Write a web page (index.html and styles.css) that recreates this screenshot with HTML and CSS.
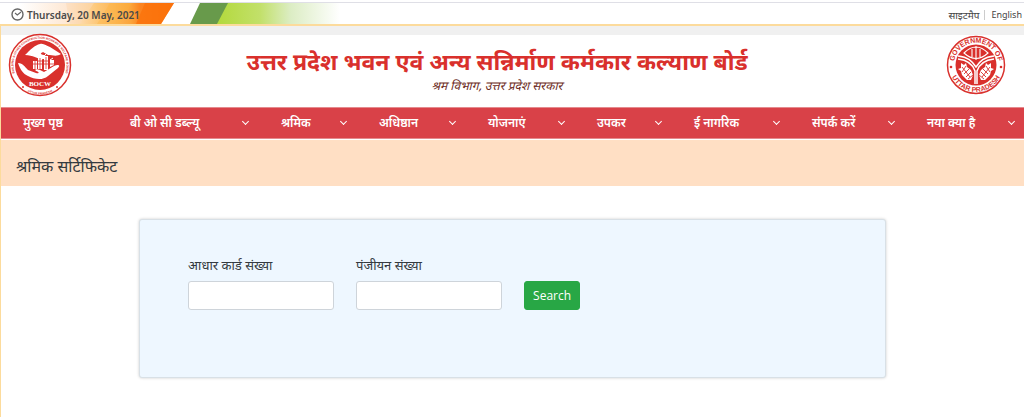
FILE: index.html
```html
<!DOCTYPE html>
<html lang="hi">
  <head>
    <meta charset="UTF-8" />
    <meta name="viewport" content="width=device-width, initial-scale=1.0" />
    <title>श्रमिक सर्टिफिकेट</title>
    <link rel="stylesheet" href="styles.css">
  </head>
  <body>
    <div class="topbar">
      <svg class="ribbon" width="340" height="21" viewBox="0 0 340 21" aria-hidden="true">
        <defs>
          <linearGradient id="saffron">
            <stop offset="0" stop-color="#fff" />
            <stop offset="0.3" stop-color="#fee8d4" />
            <stop offset="0.5" stop-color="#fdc878" />
            <stop offset="0.72" stop-color="#fba43a" />
            <stop offset="0.78" stop-color="#fb8420" />
            <stop offset="1" stop-color="#fb7410" />
          </linearGradient>
          <linearGradient id="lime">
            <stop offset="0" stop-color="#b3d93c" />
            <stop offset="0.35" stop-color="#c2e06a" />
            <stop offset="0.6" stop-color="#dcedc4" />
            <stop offset="1" stop-color="#fff" />
          </linearGradient>
        </defs>
        <path d="M20 0H174L161 21H20z" fill="url(#saffron)" />
        <path d="M66 0h28L80 21H70z" fill="#fcd9b8" opacity="0.5" />
        <path d="M110 0h22L120 21H97z" fill="#fbb43c" opacity="0.35" />
        <path d="M145 0h29L161 21H136z" fill="#fb7008" opacity="0.7" />
        <path d="M200 0H232L218 21H190z" fill="#689a4b" />
        <path d="M228 0H340V21H217z" fill="url(#lime)" />
      </svg>
      <div class="date">
        <svg width="13" height="13" viewBox="0 0 13 13" fill="none" stroke="#666" aria-hidden="true">
          <circle cx="6.5" cy="6.5" r="5.5" stroke-width="1.4" />
          <path d="M4 5l2.300 2L10 4" stroke-width="1.100" />
        </svg>
        <span>Thursday, 20 May, 2021</span>
      </div>
      <div class="top-links">
        <a href="#">साइटमैप</a>
        <a href="#" lang="en">English</a>
      </div>
    </div>

    <div class="page">
      <header class="header">
        <svg class="logo" viewBox="0 0 64 64" role="img" aria-label="BOCW">
          <defs>
            <path id="bocw-top" d="M10 47A26.500 26.500 0 1 1 54 47" />
            <path id="bocw-bottom" d="M14 55.500A30 30 0 0 0 50 55.500" />
          </defs>
          <circle cx="32" cy="32" r="30.500" fill="#fff" stroke="#d9302c" stroke-width="1.500" />
          <circle cx="32" cy="32" r="25" fill="#d9302c" />
          <text class="seal-small" text-anchor="middle"><textPath href="#bocw-top" startOffset="50%">BUILDING &amp; OTHER CONSTRUCTION WORKER'S WELFARE BOARD</textPath></text>
          <text class="seal-small" text-anchor="middle"><textPath href="#bocw-bottom" startOffset="50%">UTTAR PRADESH</textPath></text>
          <circle cx="15" cy="54" r="1" fill="#d9302c" />
          <circle cx="49" cy="54" r="1" fill="#d9302c" />
          <path d="M17 22C22 17 27 12 32 11C36 10 38 13 42 14L53 21C49 24 44 22 40 22L35 19C33 20 31 21 36 22C39 23 40 26 36 26C30 27 26 22 17 22z" fill="#fff" />
          <path d="M10 30C15 30 17 34 20 37L28 40C31 41 32 39 28 38C26 36 29 36 32 37L36 39L46 33C50 31 53 32 50 35L40 43C34 48 26 46 20 43C15 41 12 36 10 30z" fill="#fff" />
          <path d="M25 36V28h4v8zM30 36V24h4v12zM36 37V23h4v14zM42 34V27h4v5z" fill="#fff" />
          <path d="M27 28v8M32 25v11M38 24v12M25 31h21M30 28h10" stroke="#d9302c" stroke-width="0.800" fill="none" />
          <path d="M30 24l3-3M36 23l3-3M42 27l3-2" stroke="#fff" fill="none" />
          <text class="seal-name" x="32" y="53" text-anchor="middle">BOCW</text>
        </svg>

        <div class="titles">
          <h1>उत्तर प्रदेश भवन एवं अन्य सन्निर्माण कर्मकार कल्याण बोर्ड</h1>
          <p>श्रम विभाग, उत्तर प्रदेश सरकार</p>
        </div>

        <svg class="logo logo-state" viewBox="0 0 60 60" role="img" aria-label="Government of Uttar Pradesh">
          <defs>
            <path id="gov-top" d="M8 27A22.200 22.200 0 0 1 52 27" />
            <path id="gov-bottom" d="M3 33A27.200 27.200 0 0 0 57 33" />
          </defs>
          <circle cx="30" cy="30" r="28.500" fill="#fff" stroke="#d9302c" stroke-width="1.500" />
          <circle cx="30" cy="30" r="20.500" fill="#d9302c" />
          <text class="seal-text" text-anchor="middle"><textPath href="#gov-top" startOffset="50%">GOVERNMENT OF</textPath></text>
          <text class="seal-text" text-anchor="middle"><textPath href="#gov-bottom" startOffset="50%">UTTAR PRADESH</textPath></text>
          <circle cx="5" cy="32" r="1.300" fill="#d9302c" />
          <circle cx="55" cy="32" r="1.300" fill="#d9302c" />
          <path d="M12 21C22 22 26 26 30 32C34 26 38 22 48 21M12 24C21 25 27 30 29 36V49M48 24C39 25 33 30 31 36V49" fill="none" stroke="#fff" stroke-width="1.500" />
          <path d="M18 18Q30 6 42 18Q30 29 18 18zM30 11v14M26 14v8M34 14v8" fill="none" stroke="#fff" stroke-width="1.100" />
          <g id="fish" fill="#fff">
            <path d="M15 28l3 2 2-2 1 4 4 3 2 5-2 5-4 0-5-5-1-4-3-2 3-1z" />
            <path d="M16 32l8 10M20 31l-4 6M23 34l-5 5M25 37l-5 5M27 40l-5 4" stroke="#d9302c" stroke-width="0.900" />
          </g>
          <use href="#fish" transform="translate(60 0) scale(-1 1)" />
        </svg>
      </header>

      <nav>
        <ul class="menu">
          <li><a href="#">मुख्य पृष्ठ</a></li>
          <li class="has-menu"><a href="#">बी ओ सी डब्ल्यू</a></li>
          <li class="has-menu"><a href="#">श्रमिक</a></li>
          <li class="has-menu"><a href="#">अधिष्ठान</a></li>
          <li class="has-menu"><a href="#">योजनाएं</a></li>
          <li class="has-menu"><a href="#">उपकर</a></li>
          <li class="has-menu"><a href="#">ई नागरिक</a></li>
          <li class="has-menu"><a href="#">संपर्क करें</a></li>
          <li class="has-menu"><a href="#">नया क्या है</a></li>
        </ul>
      </nav>

      <h2 class="page-title">श्रमिक सर्टिफिकेट</h2>

      <main>
        <form class="search-card">
          <div class="field">
            <label for="aadhaar">आधार कार्ड संख्या</label>
            <input type="text" id="aadhaar" />
          </div>
          <div class="field">
            <label for="registration">पंजीयन संख्या</label>
            <input type="text" id="registration" />
          </div>
          <button type="button">Search</button>
        </form>
      </main>
    </div>
  </body>
</html>
```
FILE: styles.css
```css
* {
  box-sizing: border-box;
}

body {
  margin: 0;
  min-height: 100vh;
  display: flex;
  flex-direction: column;
  padding-top: 2px;
  font-family: 'Noto Sans', 'Open Sans', sans-serif;
  color: #343a40;
  background: #fff;
}

a {
  color: inherit;
  text-decoration: none;
}

.topbar {
  position: relative;
  display: flex;
  align-items: center;
  justify-content: space-between;
  height: 24px;
  padding: 2px 2px 0 11px;
  border-top: 1px solid #dfdfe6;
  border-bottom: 2px solid #fcdb9c;
}

.ribbon {
  position: absolute;
  top: 0;
  left: 0;
}

.date {
  position: relative;
  display: flex;
  align-items: center;
  gap: 3px;
  font-size: 10px;
  font-weight: 600;
  color: #4a4a4a;
}

.top-links {
  display: flex;
  align-items: center;
  font-size: 9px;
  line-height: 10px;
  color: #444;
}

.top-links a:first-child {
  font-size: 10px;
}

.top-links a + a {
  margin-left: 5px;
  padding-left: 6px;
  border-left: 1px solid #ccc;
}

.page {
  flex: 1;
  border-left: 1px solid #fcdb9c;
}

.header {
  display: flex;
  align-items: center;
  justify-content: space-between;
  height: 81px;
  padding: 0 18px 0 7px;
  border-top: 9px solid #f0f0f0;
}

.logo {
  flex: none;
  width: 64px;
  height: 64px;
  margin-bottom: 12px;
}

.logo-state {
  width: 60px;
  height: 60px;
}

.seal-small,
.seal-name,
.seal-text {
  font-family: 'Liberation Sans', sans-serif;
  font-weight: bold;
  fill: #d9302c;
}

.seal-small {
  font-size: 3px;
}

.seal-name {
  font-family: 'Liberation Serif', serif;
  font-size: 7px;
  fill: #fff;
}

.seal-text {
  font-size: 7px;
}

.titles {
  flex: 1;
  padding-right: 24px;
  text-align: center;
}

.titles h1 {
  margin: 0;
  font-size: 23px;
  line-height: 32px;
  font-weight: 700;
  color: #d9302c;
}

.titles p {
  margin: 0;
  font-family: 'Noto Sans Devanagari', 'Lohit Devanagari', 'Noto Sans', sans-serif;
  font-size: 12px;
  line-height: 20px;
  font-style: italic;
  color: #6b2a22;
}

.menu {
  display: grid;
  grid-template-columns: 107fr 151fr 98fr 109fr 109fr 97fr 118fr 115fr 97fr;
  align-items: center;
  height: 32px;
  margin: 0;
  padding: 0 0 2px 22px;
  list-style: none;
  font-size: 12px;
  font-weight: 600;
  color: #fff;
  background: #d94148;
  border-top: 1px solid #e58a8e;
  border-bottom: 1px solid #e58a8e;
}

.menu li {
  display: flex;
  align-items: center;
  justify-content: space-between;
  min-width: 0;
  padding-right: 33px;
  white-space: nowrap;
}

.menu li:last-child {
  padding-right: 10px;
}

.has-menu::after {
  content: '';
  width: 4px;
  height: 4px;
  margin-bottom: 2px;
  border: solid #fff;
  border-width: 0 1px 1px 0;
  transform: rotate(45deg);
}

.page-title {
  margin: 1px 0 0;
  padding: 12px 15px 6px;
  font-size: 16px;
  line-height: 28px;
  font-weight: 400;
  background: #ffdfc4;
}

.search-card {
  display: flex;
  align-items: flex-end;
  gap: 22px;
  width: 73%;
  margin: 33px auto;
  padding: 35px 48px 67px;
  background: #eef7ff;
  border: 1px solid #d8e0e6;
  border-radius: 3px;
  box-shadow: 0 0 3px #ccc;
}

.field {
  display: flex;
  flex-direction: column;
  gap: 6px;
  width: 146px;
}

.field label {
  font-size: 13px;
  line-height: 20px;
}

.field input {
  width: 100%;
  height: 29px;
  padding: 4px 8px;
  font: inherit;
  font-size: 12px;
  background: #fff;
  border: 1px solid #ced4da;
  border-radius: 3px;
}

.search-card button {
  height: 29px;
  padding: 0 8px;
  font-family: 'Open Sans', sans-serif;
  font-size: 12px;
  color: #fff;
  background: #28a745;
  border: 1px solid #28a745;
  border-radius: 3px;
}
```
